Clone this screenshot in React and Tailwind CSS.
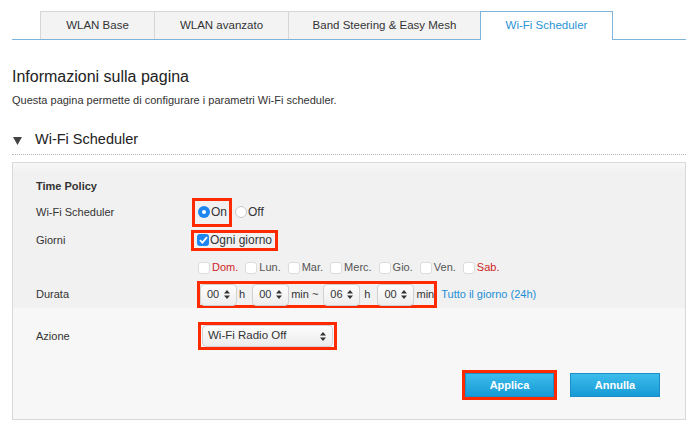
const Arrows = () => (
  <svg width="6" height="9" viewBox="0 0 6 9" className="shrink-0">
    <path d="M3 0 L6 3.6 L0 3.6 Z M0 5.4 L6 5.4 L3 9 Z" fill="#333" />
  </svg>
);

const Spin = ({ value }) => (
  <div className="flex h-[22px] w-[37px] shrink-0 items-center justify-between rounded-[4px] border border-[#d2d2d2] bg-[linear-gradient(#fdfdfd,#eeeeee)] pl-[6px] pr-[6px] shadow-[0_1px_1px_rgba(0,0,0,0.06)]">
    <span>{value}</span>
    <Arrows />
  </div>
);

const DayBox = () => (
  <span className="inline-block h-[12px] w-[12px] shrink-0 rounded-[3px] border border-[#dcdcdc] bg-white" />
);

const days = [
  { label: 'Dom.', red: true },
  { label: 'Lun.' },
  { label: 'Mar.' },
  { label: 'Merc.' },
  { label: 'Gio.' },
  { label: 'Ven.' },
  { label: 'Sab.', red: true }
];

const tabs = [
  { label: 'WLAN Base', w: 'w-[114px]' },
  { label: 'WLAN avanzato', w: 'w-[134px]' },
  { label: 'Band Steering & Easy Mesh', w: 'w-[192px]' },
  { label: 'Wi-Fi Scheduler', w: 'w-[133px]', active: true }
];

const App = () => {
  return (
    <div className="h-[427px] w-[696px] overflow-hidden bg-white font-['Liberation_Sans',Arial,sans-serif] text-[11px] text-[#333]">
      <div className="w-[674px] ml-[12px] pt-[11px]">
        {/* tabs */}
        <div className="flex border-b border-[#7eb3dc] pl-[28px]">
          {tabs.map((t) => (
            <div
              key={t.label}
              className={`flex h-[28px] items-center justify-center text-[11.5px] ${t.w} ${
                t.active
                  ? 'mb-[-1px] h-[29px] border border-b-0 border-[#7eb3dc] bg-white text-[#2a93d3]'
                  : 'border border-b-0 border-r-0 border-[#d6d6d6] bg-[#f3f3f3]'
              }`}
            >
              {t.label}
            </div>
          ))}
        </div>

        <h1 className="mt-[27px] text-[16px] leading-[20px] text-[#222]">Informazioni sulla pagina</h1>
        <p className="mt-[6px] text-[11px] leading-[14px]">
          Questa pagina permette di configurare i parametri Wi-Fi scheduler.
        </p>

        <div className="mt-[23px] flex items-center border-b border-dotted border-[#b5b5b5] pb-[6px] leading-[18px]">
          <svg width="9" height="8" viewBox="0 0 9 8" className="ml-[1px] mt-[3px]">
            <path d="M0 0 L9 0 L4.5 8 Z" fill="#444" />
          </svg>
          <span className="ml-[13px] text-[14.5px] text-[#222]">Wi-Fi Scheduler</span>
        </div>

        {/* panel */}
        <div className="mt-[7px] border border-[#d9d9d9]">
          <div className="bg-[linear-gradient(#f8f8f8,#f1f1f1_10px)] pt-[13px]">
            <div className="flex h-[20px] items-center pl-[23px] font-bold">Time Policy</div>

            <div className="mt-[2px] flex h-[28px] items-center">
              <div className="w-[185px] shrink-0 pl-[23px]">Wi-Fi Scheduler</div>
              <div className="flex items-center whitespace-nowrap text-[12px]">
                <div className="-ml-[6px] flex h-[29px] items-center border-[3px] border-[#ff2a00] pl-[3px] pr-[2px]">
                  <span className="flex h-[12px] w-[12px] items-center justify-center rounded-full bg-[#1f86f0]">
                    <span className="h-[4px] w-[4px] rounded-full bg-white" />
                  </span>
                  <span className="ml-[1px]">On</span>
                </div>
                <span className="ml-[3px] h-[12px] w-[12px] rounded-full border border-[#c8c8c8] bg-white" />
                <span className="ml-[1px]">Off</span>
              </div>
            </div>

            <div className="flex h-[28px] items-center">
              <div className="w-[185px] shrink-0 pl-[23px]">Giorni</div>
              <div className="-ml-[7px] flex h-[21px] items-center whitespace-nowrap border-[3px] border-[#ff2a00] pl-[3px] pr-[3px] text-[12px]">
                <span className="flex h-[12px] w-[12px] items-center justify-center rounded-[3px] bg-[#1f86f0]">
                  <svg width="9" height="8" viewBox="0 0 9 8">
                    <path d="M1 4.2 L3.4 6.6 L8 1.2" fill="none" stroke="#fff" strokeWidth="1.8" />
                  </svg>
                </span>
                <span className="ml-[1px]">Ogni giorno</span>
              </div>
            </div>

            <div className="flex h-[27px] items-center">
              <div className="w-[185px] shrink-0" />
              <div className="flex items-center gap-[7px]">
                {days.map((d) => (
                  <div key={d.label} className="flex items-center gap-[2px]">
                    <DayBox />
                    <span className={d.red ? 'text-[#d01f1f]' : 'text-[#555]'}>{d.label}</span>
                  </div>
                ))}
              </div>
            </div>

            <div className="flex h-[27px] items-center">
              <div className="w-[185px] shrink-0 pl-[23px]">Durata</div>
              <div className="flex items-center whitespace-nowrap">
                <div className="-ml-[1px] flex h-[27px] items-center border-[3px] border-[#ff2a00]">
                  <Spin value="00" />
                  <span className="ml-[2px] mr-[7px]">h</span>
                  <Spin value="00" />
                  <span className="ml-[2px] mr-[5px]">min ~</span>
                  <Spin value="06" />
                  <span className="ml-[4px] mr-[7px]">h</span>
                  <Spin value="00" />
                  <span className="ml-[2px]">min</span>
                </div>
                <span className="ml-[4px] text-[#1c8fd6]">Tutto il giorno (24h)</span>
              </div>
            </div>
          </div>

          <div className="bg-[#f7f7f7] pt-[14px] pb-[19px]">
            <div className="flex h-[28px] items-center">
              <div className="w-[185px] shrink-0 pl-[23px]">Azione</div>
              <div className="flex h-[28px] w-[139px] items-center border-[3px] border-[#ff2a00] p-[1px]">
                <div className="flex h-[22px] w-full items-center justify-between rounded-[4px] border border-[#d2d2d2] bg-[linear-gradient(#fdfdfd,#ececec)] pl-[5px] pr-[6px] text-[11.5px]">
                  <span>Wi-Fi Radio Off</span>
                  <Arrows />
                </div>
              </div>
            </div>

            <div className="mt-[20px] flex items-center justify-end pr-[25px]">
              <div className="border-[3px] border-[#ff2a00]">
                <button className="flex h-[24px] w-[89px] items-center justify-center border border-[#1b8ec7] bg-[linear-gradient(#3dbdec,#179ad6)] font-bold text-white">
                  Applica
                </button>
              </div>
              <button className="ml-[13px] flex h-[24px] w-[90px] items-center justify-center border border-[#1b8ec7] bg-[linear-gradient(#3dbdec,#179ad6)] font-bold text-white">
                Annulla
              </button>
            </div>
          </div>
        </div>
      </div>
    </div>
  );
};

export default App;
